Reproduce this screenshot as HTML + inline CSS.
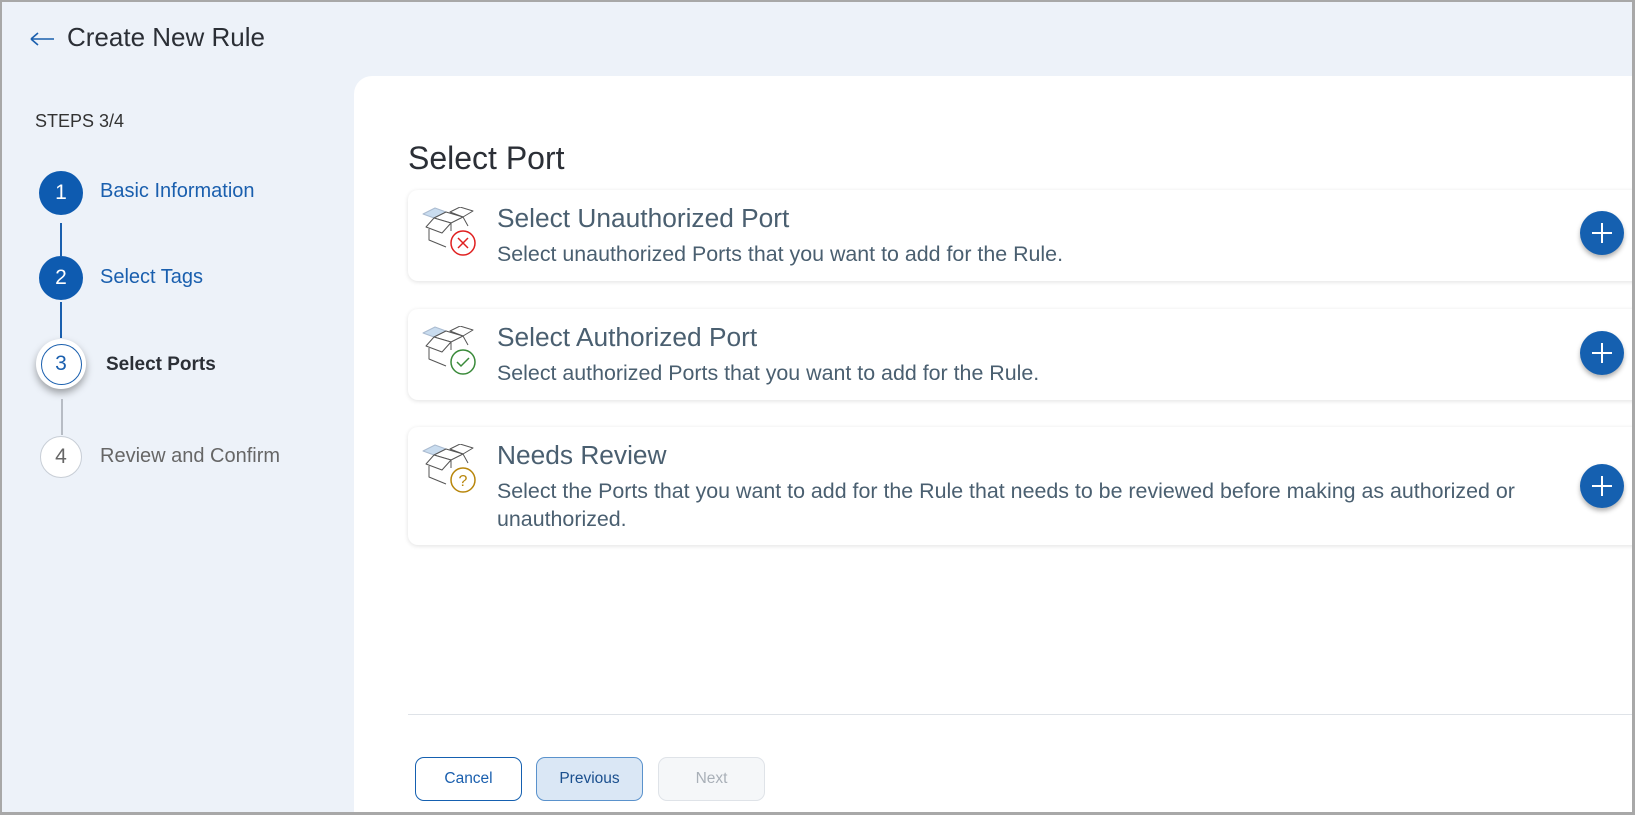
<!DOCTYPE html>
<html><head><style>
*{margin:0;padding:0;box-sizing:border-box}
body{width:1635px;height:815px;overflow:hidden;font-family:"Liberation Sans",sans-serif;background:#fff;position:relative}
.frame{position:absolute;left:0;top:0;width:1635px;height:815px;border:2px solid #a8a8a8;border-right-width:3px;border-bottom-width:3px;background:#edf2f9;overflow:hidden}
.abs{position:absolute}
.title{left:65px;top:20px;font-size:26px;color:#2b2f36}
.panel{left:352px;top:74px;width:1300px;height:760px;background:#fff;border-radius:18px}
.steps{left:33px;top:109px;font-size:18px;color:#333}
.c{position:absolute;border-radius:50%;display:flex;align-items:center;justify-content:center;font-size:21px}
.fill{background:#0e5bb0;color:#fff;width:44px;height:44px}
.lbl{position:absolute;font-size:20px;color:#1a5fae}
.vl{position:absolute;width:2px;background:#1a5fae;left:59px}
.card{position:absolute;left:406px;width:1240px;background:#fff;border-radius:10px;box-shadow:0 1px 5px rgba(0,0,0,.12)}
.ct{position:absolute;left:89px;font-size:26.3px;color:#4a5f70}
.cd{position:absolute;left:89px;font-size:21.4px;color:#4a5f70;line-height:28px;width:1050px}
.plus{position:absolute;width:44px;height:44px;border-radius:50%;background:#1560b0;box-shadow:0 3px 5px rgba(0,0,0,.3);left:1172px}
.plus:before{content:"";position:absolute;left:12px;top:21px;width:20px;height:2px;background:#fff}
.plus:after{content:"";position:absolute;left:21px;top:12px;width:2px;height:20px;background:#fff}
.icon{position:absolute;left:14px;top:17px}
.btn{position:absolute;top:755px;width:107px;height:44px;border-radius:9px;font-size:15.5px;display:flex;align-items:center;justify-content:center}
</style></head><body><div class="frame">
<svg class="abs" style="left:27px;top:27px" width="26" height="20" viewBox="0 0 26 20"><path d="M2 10H25M2 10L9 4M2 10L9 16" stroke="#1a5fae" stroke-width="1.6" fill="none"/></svg>
<div class="abs title">Create New Rule</div>
<div class="abs panel"></div>
<div class="abs steps">STEPS 3/4</div>
<div class="c fill" style="left:37px;top:169px">1</div>
<div class="lbl" style="left:98px;top:178px">Basic Information</div>
<div class="vl" style="top:221px;height:33px;left:58px"></div>
<div class="c fill" style="left:37px;top:254px">2</div>
<div class="lbl" style="left:98px;top:264px">Select Tags</div>
<div class="vl" style="top:300px;height:36px;left:58px"></div>
<div class="c" style="left:34px;top:337px;width:50px;height:50px;background:#fff;box-shadow:0 4px 8px rgba(0,0,0,.35)"><div style="width:41px;height:41px;border-radius:50%;border:1.5px solid #1a5fae;color:#1a5fae;display:flex;align-items:center;justify-content:center;font-size:21px">3</div></div>
<div class="lbl" style="left:104px;top:352px;color:#2b2f36;font-weight:bold;font-size:19px">Select Ports</div>
<div class="vl" style="top:397px;height:36px;background:#b7bcc4;width:1.5px"></div>
<div class="c" style="left:38px;top:434px;width:42px;height:42px;background:#fff;border:1.5px solid #c8ced6;color:#666">4</div>
<div class="lbl" style="left:98px;top:443px;color:#666">Review and Confirm</div>
<div class="abs" style="left:406px;top:138px;font-size:32px;color:#2b2f36">Select Port</div>

<div class="card" style="top:188px;height:91px">
<svg class="icon" width="56" height="52" viewBox="0 0 56 52"><g stroke="#555" stroke-width="1" fill="#fff" stroke-linejoin="round"><path d="M1 7L13 1L24 5L12 11Z" fill="#c9dcef" stroke="#aabbd0"/><path d="M28 5L38 0L51 4L41 10Z"/><path d="M12 11L24 5L41 10L29 16Z"/><path d="M4 20L12 11L29 16L20 26Z"/><path d="M41 10L46 19"/><path d="M7 22V33L24 40"/><path d="M29 16V24"/></g><circle cx="41" cy="36" r="12" fill="#fff" stroke="#e02020" stroke-width="1.5"/><path d="M36 31L46 41M46 31L36 41" stroke="#e02020" stroke-width="1.5"/></svg>
<div class="ct" style="top:13px">Select Unauthorized Port</div>
<div class="cd" style="top:50px">Select unauthorized Ports that you want to add for the Rule.</div>
<div class="plus" style="top:21px"></div></div>

<div class="card" style="top:307px;height:91px">
<svg class="icon" width="56" height="52" viewBox="0 0 56 52"><g stroke="#555" stroke-width="1" fill="#fff" stroke-linejoin="round"><path d="M1 7L13 1L24 5L12 11Z" fill="#c9dcef" stroke="#aabbd0"/><path d="M28 5L38 0L51 4L41 10Z"/><path d="M12 11L24 5L41 10L29 16Z"/><path d="M4 20L12 11L29 16L20 26Z"/><path d="M41 10L46 19"/><path d="M7 22V33L24 40"/><path d="M29 16V24"/></g><circle cx="41" cy="36" r="12" fill="#fff" stroke="#3a8a3a" stroke-width="1.5"/><path d="M35 36L39 40L47 32" stroke="#3a8a3a" stroke-width="1.5" fill="none"/></svg>
<div class="ct" style="top:13px">Select Authorized Port</div>
<div class="cd" style="top:50px">Select authorized Ports that you want to add for the Rule.</div>
<div class="plus" style="top:22px"></div></div>

<div class="card" style="top:425px;height:118px">
<svg class="icon" width="56" height="52" viewBox="0 0 56 52"><g stroke="#555" stroke-width="1" fill="#fff" stroke-linejoin="round"><path d="M1 7L13 1L24 5L12 11Z" fill="#c9dcef" stroke="#aabbd0"/><path d="M28 5L38 0L51 4L41 10Z"/><path d="M12 11L24 5L41 10L29 16Z"/><path d="M4 20L12 11L29 16L20 26Z"/><path d="M41 10L46 19"/><path d="M7 22V33L24 40"/><path d="M29 16V24"/></g><circle cx="41" cy="36" r="12" fill="#fff" stroke="#b8860b" stroke-width="1.5"/><text x="41" y="42" font-size="16" text-anchor="middle" fill="#b8860b" font-family="Liberation Sans">?</text></svg>
<div class="ct" style="top:13px">Needs Review</div>
<div class="cd" style="top:50px">Select the Ports that you want to add for the Rule that needs to be reviewed before making as authorized or unauthorized.</div>
<div class="plus" style="top:37px"></div></div>

<div class="abs" style="left:406px;top:712px;width:1230px;height:1px;background:#dfe3e8"></div>
<div class="btn" style="left:413px;border:1.5px solid #1560b0;color:#1a5fae;background:#fff">Cancel</div>
<div class="btn" style="left:534px;border:1.5px solid #5a92cc;color:#1a4f8e;background:#dae7f5">Previous</div>
<div class="btn" style="left:656px;border:1px solid #dfe3e8;color:#a9b0b8;background:#f5f7f9">Next</div>
</div></body></html>
